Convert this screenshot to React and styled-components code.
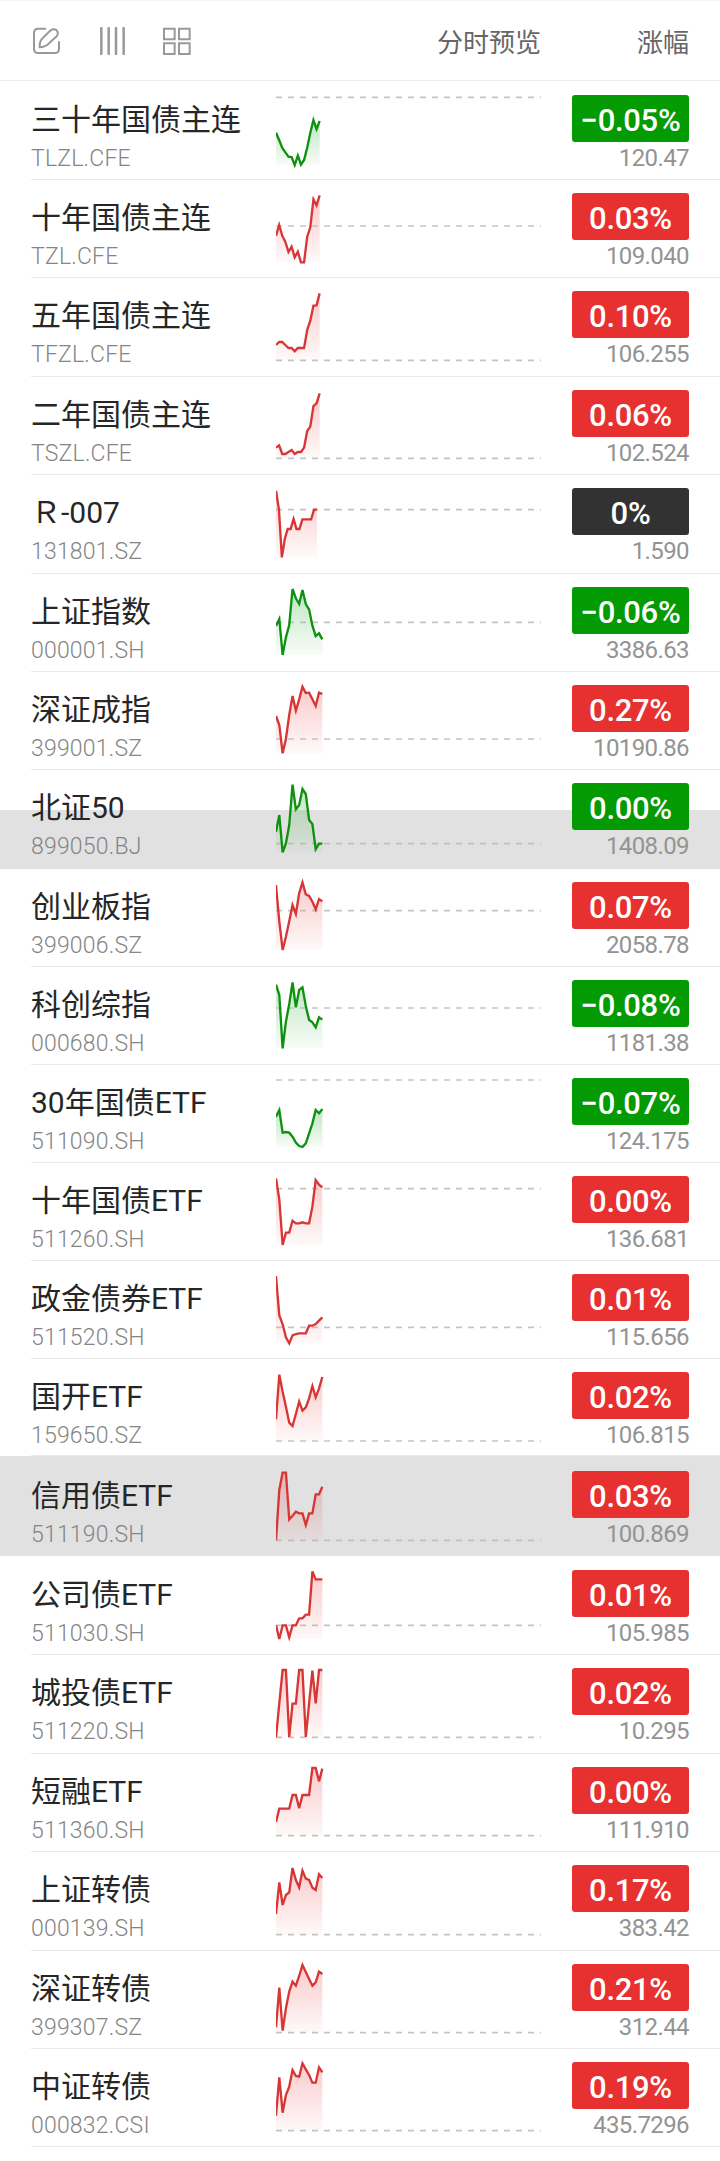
import React from "react";
import styled, { createGlobalStyle } from "styled-components";

const GlobalStyle = createGlobalStyle`
    * {
        box-sizing: border-box;
    }
    body {
        margin: 0;
        background-color: #fff;
        font-family: Roboto, "Noto Sans CJK SC", sans-serif;
    }
`;

const RED = "#e73131";
const GREEN = "#049a04";
const GRAY = "#323232";

// points / base are y values in a 294 high box, 15 samples per line
const quotes = [
    { name: "三十年国债主连", code: "TLZL.CFE", rate: "−0.05%", price: "120.47", color: GREEN, h: 99, inset: 1, end: 131, base: 49, points: [155, 177, 201, 214, 227, 228, 252, 224, 251, 237, 200, 155, 117, 144, 120] },
    { name: "十年国债主连", code: "TZL.CFE", rate: "0.03%", price: "109.040", color: RED, h: 98, end: 131, base: 138, points: [168, 135, 167, 186, 216, 200, 232, 215, 247, 247, 170, 142, 58, 76, 46] },
    { name: "五年国债主连", code: "TFZL.CFE", rate: "0.10%", price: "106.255", color: RED, h: 99, end: 131, base: 247, points: [201, 192, 192, 201, 210, 210, 220, 210, 210, 210, 156, 128, 83, 82, 46] },
    { name: "二年国债主连", code: "TSZL.CFE", rate: "0.06%", price: "102.524", color: RED, h: 98, end: 131, base: 244, points: [212, 205, 231, 231, 225, 219, 231, 225, 225, 212, 162, 149, 87, 79, 49] },
    { name: "Ｒ-007", code: "131801.SZ", rate: "0%", price: "1.590", color: GRAY, h: 99, end: 123, base: 104, points: [47, 103, 247, 192, 162, 162, 132, 162, 162, 133, 133, 133, 133, 104, 104] },
    { name: "上证指数", code: "000001.SH", rate: "−0.06%", price: "3386.63", color: GREEN, h: 98, end: 139, base: 145, points: [156, 135, 243, 190, 153, 45, 73, 90, 48, 90, 106, 155, 186, 178, 196] },
    { name: "深证成指", code: "399001.SZ", rate: "0.27%", price: "10190.86", color: RED, h: 98, end: 139, base: 201, points: [132, 159, 244, 200, 129, 72, 116, 82, 44, 63, 62, 82, 102, 62, 66] },
    { name: "北证50", code: "899050.BJ", rate: "0.00%", price: "1408.09", color: GREEN, h: 99, end: 139, base: 221, shade: "40px", points: [185, 135, 247, 220, 165, 44, 118, 105, 57, 72, 150, 162, 238, 221, 221] },
    { name: "创业板指", code: "399006.SZ", rate: "0.07%", price: "2058.78", color: RED, h: 98, end: 139, base: 125, points: [48, 157, 243, 203, 157, 108, 135, 73, 40, 76, 81, 98, 121, 90, 97] },
    { name: "科创综指", code: "000680.SH", rate: "−0.08%", price: "1181.38", color: GREEN, h: 98, end: 139, base: 123, points: [53, 84, 244, 164, 111, 46, 121, 69, 61, 117, 159, 166, 181, 151, 158] },
    { name: "30年国债ETF", code: "511090.SH", rate: "−0.07%", price: "124.175", color: GREEN, h: 98, end: 139, base: 45, points: [155, 135, 203, 201, 203, 215, 233, 243, 246, 235, 205, 175, 135, 145, 132] },
    { name: "十年国债ETF", code: "511260.SH", rate: "0.00%", price: "136.681", color: RED, h: 98, end: 139, base: 77, points: [46, 109, 246, 209, 209, 173, 181, 181, 178, 181, 181, 131, 51, 65, 73] },
    { name: "政金债券ETF", code: "511520.SH", rate: "0.01%", price: "115.656", color: RED, h: 98, end: 139, base: 199, points: [45, 163, 190, 229, 247, 223, 219, 217, 217, 217, 194, 194, 189, 179, 169] },
    { name: "国开ETF", code: "159650.SZ", rate: "0.02%", price: "106.815", color: RED, h: 97, end: 139, base: 246, points: [181, 47, 98, 143, 191, 201, 165, 128, 155, 145, 118, 81, 115, 88, 54] },
    { name: "信用债ETF", code: "511190.SH", rate: "0.03%", price: "100.869", color: RED, h: 100, inset: 2, end: 139, base: 253, shade: "0px", points: [253, 102, 50, 50, 190, 179, 167, 172, 172, 207, 172, 172, 115, 115, 92] },
    { name: "公司债ETF", code: "511030.SH", rate: "0.01%", price: "105.985", color: RED, h: 99, inset: 1, end: 139, base: 208, points: [208, 249, 208, 208, 244, 208, 208, 187, 187, 176, 176, 46, 70, 70, 70] },
    { name: "城投债ETF", code: "511220.SH", rate: "0.02%", price: "10.295", color: RED, h: 99, end: 139, base: 247, points: [247, 145, 45, 45, 246, 146, 146, 45, 45, 246, 145, 47, 145, 45, 45] },
    { name: "短融ETF", code: "511360.SH", rate: "0.00%", price: "111.910", color: RED, h: 98, end: 139, base: 245, points: [204, 164, 164, 164, 164, 123, 123, 163, 123, 123, 123, 42, 42, 82, 44] },
    { name: "上证转债", code: "000139.SH", rate: "0.17%", price: "383.42", color: RED, h: 99, end: 139, base: 248, points: [186, 91, 159, 129, 121, 48, 84, 106, 56, 80, 84, 107, 114, 67, 78] },
    { name: "深证转债", code: "399307.SZ", rate: "0.21%", price: "312.44", color: RED, h: 98, end: 139, base: 245, points: [229, 110, 239, 172, 122, 92, 104, 75, 42, 63, 84, 104, 94, 62, 69] },
    { name: "中证转债", code: "000832.CSI", rate: "0.19%", price: "435.7296", color: RED, h: 98, end: 139, base: 245, points: [200, 85, 191, 138, 113, 63, 81, 83, 43, 61, 78, 101, 101, 55, 70] },
];

const Page = styled.div`
    width: 720px;
    height: 2161px;
    overflow: hidden;
    background-color: #fff;
`;

const Header = styled.header`
    display: flex;
    align-items: center;
    height: 81px;
    padding: 0 31px;
    border-top: 1px solid #f5f5f5;
    border-bottom: 1px solid #eeeeee;
    color: #666;
    font-size: 26px;
`;

const Tools = styled.div`
    display: flex;
    flex: 1;
    svg {
        display: block;
    }
`;

const HeaderCell = styled.div`
    width: ${({ $width }) => $width}px;
    text-align: right;
    line-height: 38px;
    padding-top: 4px;
`;

const Row = styled.div`
    height: ${({ $height }) => $height}px;
    padding-left: 31px;
    background: ${({ $shade }) =>
        $shade ? `linear-gradient(#fff ${$shade}, #e1e1e1 ${$shade})` : "#fff"};
`;

const RowInner = styled.div`
    display: grid;
    grid-template-columns: 245px 265px 1fr;
    height: 100%;
    padding-right: 31px;
    border-bottom: 1px solid ${({ $plain }) => ($plain ? "transparent" : "#e9e9e9")};
`;

const Info = styled.div`
    padding-top: ${({ $inset }) => 18 + $inset}px;
    white-space: nowrap;
    .name {
        font-size: 30px;
        line-height: 40px;
        color: #262626;
    }
    .code {
        margin-top: 5px;
        font-size: 23px;
        font-weight: 300;
        line-height: 28px;
        letter-spacing: 0.2px;
        color: #858585;
    }
`;

const Chart = styled.svg`
    display: block;
    width: 265px;
    height: 98px;
`;

const Figures = styled.div`
    display: flex;
    flex-direction: column;
    align-items: flex-end;
    padding-top: ${({ $inset }) => 13 + $inset}px;
`;

const Badge = styled.div`
    width: 117px;
    height: 47px;
    padding-top: 2px;
    border-radius: 3px;
    background-color: ${({ $color }) => $color};
    color: #fff;
    font-size: 31px;
    font-weight: 500;
    line-height: 47px;
    letter-spacing: -0.3px;
    text-align: center;
    white-space: nowrap;
`;

const Price = styled.div`
    margin-top: 2px;
    font-size: 24px;
    line-height: 28px;
    letter-spacing: -0.6px;
    color: #939393;
`;

const ToolIcons = () => (
    <Tools>
        <svg width="162" height="28" viewBox="0 0 486 84" fill="none" stroke="#999" strokeWidth="6">
            <path
                d="M43 5H22Q9 5 9 18V65Q9 78 22 78H71Q84 78 84 65V45"
                strokeLinecap="round"
            />
            <path
                d="M26 61Q25 42 36 32L59 10Q68 3 77 10Q84 18 77 28L54 49Q44 60 26 61Z"
                strokeLinejoin="round"
            />
            <path d="M211 3V81M233 3V81M255 3V81M278 3V81" strokeWidth="7.5" strokeLinecap="round" />
            <path d="M399 5H431V37H399ZM444 5H476V37H444ZM399 49H431V81H399ZM444 49H476V81H444Z" />
        </svg>
    </Tools>
);

const TrendChart = ({ id, points, base, end, color }) => {
    const step = end / (points.length - 1);
    const line = points.map((y, i) => `${(i * step).toFixed(1)},${y}`).join(" ");
    const bottom = Math.max(base > 200 ? base : 0, ...points);
    const stroke = color === GREEN ? "#0c920f" : "#d83535";
    const fill = color === GREEN ? "#12a016" : "#ee3c3c";
    return (
        <Chart viewBox="0 0 795 294">
            <defs>
                <linearGradient id={id} x1="0" y1="0" x2="0" y2="1">
                    <stop offset="0" stopColor={fill} stopOpacity="0.27" />
                    <stop offset="1" stopColor={fill} stopOpacity="0.03" />
                </linearGradient>
            </defs>
            <polygon points={`0,${bottom} ${line} ${end},${bottom}`} fill={`url(#${id})`} />
            <path
                d={`M0 ${base}H795`}
                stroke="#b5b5b5"
                strokeOpacity="0.8"
                strokeWidth="5"
                strokeDasharray="18 18"
            />
            <polyline points={line} fill="none" stroke={stroke} strokeWidth="7" />
        </Chart>
    );
};

const QuoteRow = ({ item, index }) => {
    const inset = item.inset || 0;
    return (
        <Row $height={item.h} $shade={item.shade}>
            <RowInner $plain={Boolean(item.shade)}>
                <Info $inset={inset}>
                    <div className="name">{item.name}</div>
                    <div className="code">{item.code}</div>
                </Info>
                <TrendChart
                    id={`trend-${index}`}
                    points={item.points}
                    base={item.base}
                    end={item.end}
                    color={item.color}
                />
                <Figures $inset={inset}>
                    <Badge $color={item.color}>{item.rate}</Badge>
                    <Price>{item.price}</Price>
                </Figures>
            </RowInner>
        </Row>
    );
};

const App = () => {
    return (
        <Page>
            <GlobalStyle />
            <Header>
                <ToolIcons />
                <HeaderCell $width={120}>分时预览</HeaderCell>
                <HeaderCell $width={148}>涨幅</HeaderCell>
            </Header>
            {quotes.map((item, index) => (
                <QuoteRow key={item.code} item={item} index={index} />
            ))}
        </Page>
    );
};

export default App;
